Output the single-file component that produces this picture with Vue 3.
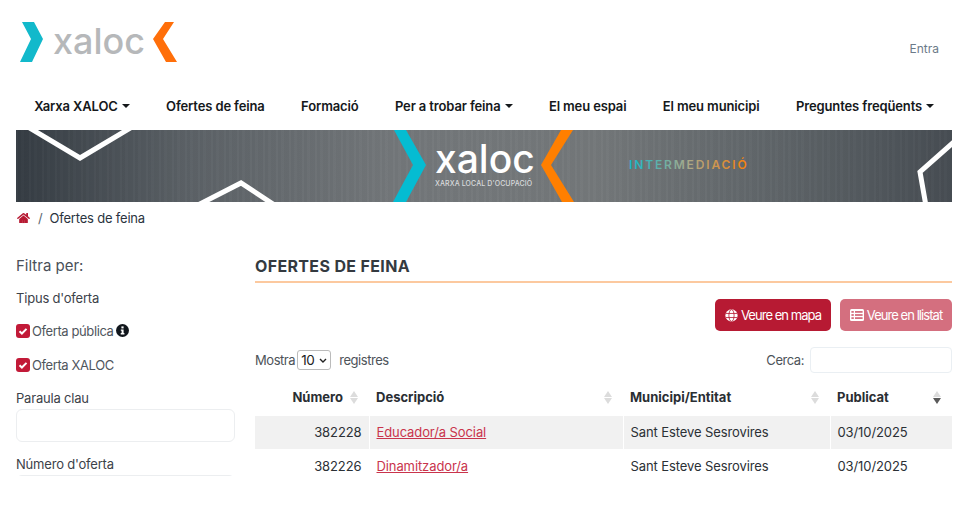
<script setup>
const navItems = [
  { label: 'Xarxa XALOC', caret: true },
  { label: 'Ofertes de feina' },
  { label: 'Formació' },
  { label: 'Per a trobar feina', caret: true },
  { label: 'El meu espai' },
  { label: 'El meu municipi' },
  { label: 'Preguntes freqüents', caret: true },
]
const rows = [
  { num: '382228', desc: 'Educador/a Social', mun: 'Sant Esteve Sesrovires', date: '03/10/2025' },
  { num: '382226', desc: 'Dinamitzador/a', mun: 'Sant Esteve Sesrovires', date: '03/10/2025' },
]
const headers = [
  { label: 'Número', cls: 'num' },
  { label: 'Descripció' },
  { label: 'Municipi/Entitat' },
  { label: 'Publicat', active: true },
]
</script>

<template>
  <div class="page">
    <header class="top">
      <div class="logo">
        <svg class="logo-mark" width="165" height="44" viewBox="0 0 165 44">
          <polygon points="6,1 18,1 27,18 16,41 4,41 15,18" fill="#12b9cb" />
          <polygon points="149,1 158,1 147,18 161,41 150,41 137,18" fill="#ff6f0a" />
        </svg>
        <span class="logo-text">xaloc</span>
      </div>
      <a class="login">Entra</a>
    </header>

    <nav class="nav">
      <a v-for="item in navItems" :key="item.label" class="nav-item">
        {{ item.label }}<i v-if="item.caret" class="caret"></i>
      </a>
    </nav>

    <div class="banner">
      <svg width="936" height="72" viewBox="0 0 936 72">
        <defs>
          <linearGradient id="interGrad" x1="613" x2="731" y1="0" y2="0" gradientUnits="userSpaceOnUse">
            <stop offset="0" stop-color="#15b8cb" />
            <stop offset="0.5" stop-color="#a9a98a" />
            <stop offset="1" stop-color="#f77f0c" />
          </linearGradient>
        </defs>
        <polyline points="12,-3 64,28 116,-3" fill="none" stroke="#fff" stroke-width="5" />
        <polyline points="180,76 225,53 260,76" fill="none" stroke="#fff" stroke-width="5" />
        <polyline points="940,10 904,42 910,76" fill="none" stroke="#fff" stroke-width="5" />
        <polygon points="378,0 390,0 410,35 390,72 377,72 397,35" fill="#05bcd2" />
        <polygon points="545,0 557,0 535,35 558,72 546,72 525,35" fill="#ff7f00" />
        <text x="419" y="43" class="b-logo">xaloc</text>
        <text x="419" y="56" class="b-sub">XARXA LOCAL D'OCUPACIÓ</text>
        <text x="613" y="39" class="b-inter" fill="url(#interGrad)">INTERMEDIACIÓ</text>
      </svg>
    </div>

    <div class="crumbs">
      <svg class="home" width="13" height="12" viewBox="0 0 576 512"><path fill="#b71a33" d="M280.37 148.26L96 300.11V464a16 16 0 0 0 16 16l112.06-.29a16 16 0 0 0 15.92-16V368a16 16 0 0 1 16-16h64a16 16 0 0 1 16 16v95.64a16 16 0 0 0 16 16.05L464 480a16 16 0 0 0 16-16V300L295.67 148.26a12.19 12.19 0 0 0-15.3 0zM571.6 251.47L488 182.56V44.05a12 12 0 0 0-12-12h-56a12 12 0 0 0-12 12v72.61L318.47 43a48 48 0 0 0-61 0L4.34 251.47a12 12 0 0 0-1.6 16.9l25.5 31A12 12 0 0 0 45.15 301l235.22-193.74a12.19 12.19 0 0 1 15.3 0L530.9 301a12 12 0 0 0 16.9-1.6l25.5-31a12 12 0 0 0-1.7-16.93z" /><rect x="230" y="340" width="116" height="140" fill="#b71a33" /></svg>
      <span class="sep">/</span>
      <span>Ofertes de feina</span>
    </div>

    <div class="content">
      <aside class="side">
        <div class="filter-title">Filtra per:</div>
        <div class="label first">Tipus d'oferta</div>
        <label class="check">
          <svg width="14" height="14" viewBox="0 0 14 14"><rect width="14" height="14" rx="3" fill="#c21a38" /><path d="M3.5 7.2l2.4 2.3 4.6-4.6" fill="none" stroke="#fff" stroke-width="2" /></svg>
          <span>Oferta pública</span>
          <svg class="info" width="13" height="13" viewBox="0 0 13 13"><circle cx="6.5" cy="6.5" r="6.5" fill="#11161c" /><rect x="5.4" y="2.4" width="2.2" height="2" fill="#fff" /><path d="M4.8 5.4h2.8v3.6h.8v1.4H4.7V9h.9V6.8h-.8z" fill="#fff" /></svg>
        </label>
        <label class="check second">
          <svg width="14" height="14" viewBox="0 0 14 14"><rect width="14" height="14" rx="3" fill="#c21a38" /><path d="M3.5 7.2l2.4 2.3 4.6-4.6" fill="none" stroke="#fff" stroke-width="2" /></svg>
          <span>Oferta XALOC</span>
        </label>
        <div class="label key">Paraula clau</div>
        <div class="input"></div>
        <div class="label numof">Número d'oferta</div>
        <div class="input"></div>
      </aside>

      <main class="main">
        <h1 class="title">OFERTES DE FEINA</h1>
        <div class="actions">
          <a class="btn">
            <svg width="13" height="13" viewBox="0 0 14 14"><circle cx="7" cy="7" r="6.6" fill="#fff" /><g fill="none" stroke="#b71a33" stroke-width="0.9"><ellipse cx="7" cy="7" rx="2.8" ry="6.4" /><path d="M1 4.8h12M1 9.2h12" /></g></svg>
            Veure en mapa
          </a>
          <a class="btn faded">
            <svg width="14" height="12" viewBox="0 0 14 12"><rect width="14" height="12" rx="1.5" fill="#fff" /><g fill="#d46f7f"><rect x="1.4" y="2" width="2.4" height="1.8" /><rect x="5" y="2" width="7.6" height="1.8" /><rect x="1.4" y="5.1" width="2.4" height="1.8" /><rect x="5" y="5.1" width="7.6" height="1.8" /><rect x="1.4" y="8.2" width="2.4" height="1.8" /><rect x="5" y="8.2" width="7.6" height="1.8" /></g></svg>
            Veure en llistat
          </a>
        </div>
        <div class="tools">
          <div class="length">
            Mostra
            <span class="select">10<svg width="8" height="5" viewBox="0 0 8 5"><path d="M1 1l3 3 3-3" fill="none" stroke="#222" stroke-width="1.4" /></svg></span>
            <span class="reg">registres</span>
          </div>
          <div class="search">Cerca:<div class="search-box"></div></div>
        </div>
        <table class="table">
          <colgroup>
            <col class="c1" /><col class="c2" /><col class="c3" /><col class="c4" />
          </colgroup>
          <thead>
            <tr>
              <th v-for="h in headers" :key="h.label" :class="h.cls">
                {{ h.label }}
                <span class="sort" :class="{ active: h.active }"><i class="up"></i><i class="down"></i></span>
              </th>
            </tr>
          </thead>
          <tbody>
            <tr v-for="r in rows" :key="r.num">
              <td class="num">{{ r.num }}</td>
              <td><a class="link">{{ r.desc }}</a></td>
              <td>{{ r.mun }}</td>
              <td>{{ r.date }}</td>
            </tr>
          </tbody>
        </table>
      </main>
    </div>
  </div>
</template>

<style>
html, body { margin: 0; background: #fff; overflow: hidden; }
</style>

<style scoped>
.page {
  height: 476px;
  overflow: hidden;
  padding: 0 28px 0 16px;
  font-family: Inter, "Liberation Sans", sans-serif;
  font-size: 13px;
  color: #212529;
  letter-spacing: -0.2px;
}
.top { display: flex; justify-content: space-between; height: 92px; }
.logo { display: flex; align-items: flex-start; padding-top: 21px; }
.logo-mark { display: block; margin-right: -165px; }
.logo-text {
  margin-left: 37px;
  margin-top: -2px;
  font-size: 36px;
  line-height: 44px;
  font-weight: 500;
  color: #b6b8ba;
  letter-spacing: 0;
}
.login { margin: 41px 13px 0 0; font-size: 12px; line-height: 16px; color: #6c7a89; letter-spacing: 0; }
.nav { display: flex; height: 38px; align-items: flex-start; }
.nav-item {
  display: flex;
  align-items: center;
  padding: 6px 18.2px 0;
  line-height: 16px;
  font-weight: 600;
  color: #15181b;
  white-space: nowrap;
  letter-spacing: -0.13px;
}
.caret {
  margin-left: 4px;
  border-left: 4px solid transparent;
  border-right: 4px solid transparent;
  border-top: 4px solid #15181b;
}
.banner {
  height: 72px;
  background:
    repeating-linear-gradient(90deg, rgba(255,255,255,.02) 0 2px, rgba(0,0,0,.02) 2px 5px, rgba(255,255,255,.01) 5px 8px, rgba(0,0,0,.015) 8px 13px),
    linear-gradient(90deg, #353c43 0%, #5b6166 18%, #73777a 40%, #74787a 62%, #5e6468 82%, #474d53 100%);
}
.banner svg { display: block; }
.b-logo { font-size: 39px; font-weight: 500; fill: #fff; letter-spacing: 0; }
.b-sub { font-size: 7px; font-weight: 500; fill: #d9dbdc; letter-spacing: 0.1px; }
.b-inter { font-size: 12px; font-weight: 600; letter-spacing: 1.85px; }
.crumbs { display: flex; align-items: center; height: 32px; color: #2b3440; }
.home { margin-left: 1px; }
.sep { margin: 0 7px 0 8px; color: #5b6670; }
.content { display: flex; gap: 20px; margin-top: 16px; }
.side { width: 219px; flex: none; color: #4a5058; }
.filter-title { font-size: 15px; line-height: 20px; margin-top: 6px; letter-spacing: 0; }
.label { line-height: 16px; color: #3c4249; }
.first { margin-top: 14px; }
.check { display: flex; align-items: center; gap: 2px; height: 16px; margin-top: 17px; color: #50565d; letter-spacing: -0.4px; }
.second { margin-top: 18px; }
.info { margin-left: 1px; margin-top: -2px; }
.key { margin-top: 17px; }
.numof { margin-top: 14px; }
.input {
  height: 31px;
  margin-top: 3px;
  border: 1px solid #eceef0;
  border-radius: 6px;
  background: #fff;
}
.main { flex: 1; min-width: 0; }
.title {
  margin: 0;
  padding: 7px 0 6px;
  height: 18px;
  font-size: 16px;
  line-height: 18px;
  font-weight: 700;
  color: #343a40;
  letter-spacing: 0.35px;
  box-sizing: content-box;
  border-bottom: 2px solid #fcc99f;
}
.actions { display: flex; justify-content: flex-end; gap: 9px; margin-top: 16px; }
.btn {
  display: flex;
  align-items: center;
  justify-content: center;
  gap: 3px;
  height: 32px;
  width: 116px;
  background: #b71a33;
  border-radius: 5px;
  color: #fff;
  letter-spacing: -0.95px;
}
.faded { background: #d46f7f; width: 112px; }
.tools { display: flex; justify-content: space-between; align-items: center; margin-top: 16px; height: 26px; color: #4d5359; letter-spacing: -0.45px; }
.length { display: flex; align-items: center; }
.select {
  display: flex;
  align-items: center;
  justify-content: space-between;
  box-sizing: border-box;
  width: 34px;
  height: 20px;
  margin: 0 8px 0 2px;
  padding: 0 3px;
  border: 1px solid #bbb;
  border-radius: 3px;
  color: #222;
  font-size: 13.5px;
}
.search { display: flex; align-items: center; gap: 6px; }
.search-box {
  box-sizing: border-box;
  width: 142px;
  height: 26px;
  border: 1px solid #eaeff3;
  border-radius: 4px;
}
.table {
  width: 697px;
  table-layout: fixed;
  border-collapse: collapse;
  margin-top: 11px;
}
.c1 { width: 114px; }
.c2 { width: 254px; }
.c3 { width: 207px; }
.c4 { width: 122px; }
th {
  position: relative;
  height: 32px;
  box-sizing: border-box;
  padding: 0 7px 6px 7px;
  text-align: left;
  font-weight: 700;
  color: #2a2e33;
  letter-spacing: 0;
}
th.num { padding-right: 26px; text-align: right; }
td {
  height: 33px;
  padding: 0 7px;
  color: #2b3035;
  border-left: 1px solid #fff;
  box-sizing: border-box;
  letter-spacing: -0.1px;
}
td:first-child { border-left: 0; }
tbody tr:first-child td { background: #f1f1f1; padding-bottom: 1px; }
td.num { text-align: right; }
.link { color: #c9344c; text-decoration: underline; }
.sort {
  position: absolute;
  right: 11px;
  top: 7px;
  display: flex;
  flex-direction: column;
  gap: 1px;
}
.sort i {
  display: block;
  border-left: 4px solid transparent;
  border-right: 4px solid transparent;
}
.up { border-bottom: 6px solid #dcdcdc; }
.down { border-top: 6px solid #dcdcdc; }
.active .down { border-top-color: #5a5a5a; }
</style>
